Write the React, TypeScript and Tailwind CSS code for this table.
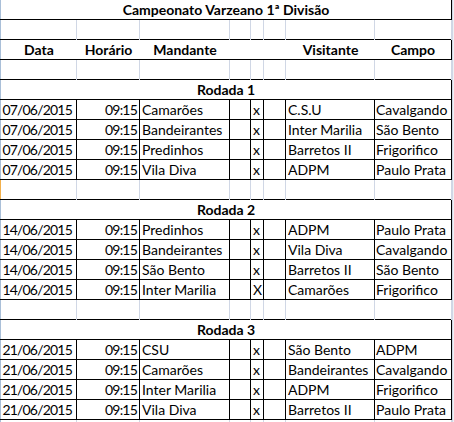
type Match = [string, string, string, string, string, string];

const rounds: Array<{ title: string; matches: Match[] }> = [
  {
    title: 'Rodada 1',
    matches: [
      ['07/06/2015', '09:15', 'Camarões', 'x', 'C.S.U', 'Cavalgando'],
      ['07/06/2015', '09:15', 'Bandeirantes', 'x', 'Inter Marilia', 'São Bento'],
      ['07/06/2015', '09:15', 'Predinhos', 'x', 'Barretos II', 'Frigorifico'],
      ['07/06/2015', '09:15', 'Vila Diva', 'x', 'ADPM', 'Paulo Prata'],
    ],
  },
  {
    title: 'Rodada 2',
    matches: [
      ['14/06/2015', '09:15', 'Predinhos', 'x', 'ADPM', 'Paulo Prata'],
      ['14/06/2015', '09:15', 'Bandeirantes', 'x', 'Vila Diva', 'Cavalgando'],
      ['14/06/2015', '09:15', 'São Bento', 'x', 'Barretos II', 'São Bento'],
      ['14/06/2015', '09:15', 'Inter Marilia', 'X', 'Camarões', 'Frigorifico'],
    ],
  },
  {
    title: 'Rodada 3',
    matches: [
      ['21/06/2015', '09:15', 'CSU', 'x', 'São Bento', 'ADPM'],
      ['21/06/2015', '09:15', 'Camarões', 'x', 'Bandeirantes', 'Cavalgando'],
      ['21/06/2015', '09:15', 'Inter Marilia', 'x', 'ADPM', 'Frigorifico'],
      ['21/06/2015', '09:15', 'Vila Diva', 'x', 'Barretos II', 'Paulo Prata'],
    ],
  },
];

const grid = 'grid grid-cols-[76px_63px_90px_21px_13px_22px_89px_77px]';
const cell = 'overflow-hidden whitespace-nowrap leading-[19px]';

function Edge({ marked }: { marked?: boolean }) {
  return <div className={marked ? 'w-px shrink-0 bg-[#f2b04c]' : 'w-px shrink-0 bg-[#a9bfd8]'} />;
}

function BlankRow({ marked, short }: { marked?: boolean; short?: boolean }) {
  return (
    <div className={short ? 'flex h-[2px] overflow-hidden' : 'flex h-5 border-b border-black'}>
      <Edge marked={marked} />
      <div className={grid}>
        {Array.from({ length: 8 }).map((_, i) => (
          <div key={i} className="h-5 border-r border-[#d0d7e5]" />
        ))}
      </div>
    </div>
  );
}

function SpanRow({ text }: { text: string }) {
  return (
    <div className="flex h-5 border-b border-black">
      <Edge />
      <div className={`${cell} w-[451px] border-r border-black text-center font-bold`}>{text}</div>
    </div>
  );
}

function HeaderRow() {
  return (
    <div className="flex h-5 border-b border-black">
      <Edge />
      <div className={`${grid} font-bold`}>
        <div className={`${cell} text-center`}>Data</div>
        <div className={`${cell} text-center`}>Horário</div>
        <div className={`${cell} text-center`}>Mandante</div>
        <div />
        <div />
        <div />
        <div className={`${cell} text-center`}>Visitante</div>
        <div className={`${cell} border-r border-black text-center`}>Campo</div>
      </div>
    </div>
  );
}

function MatchRow({ m }: { m: Match }) {
  const [date, time, home, vs, away, field] = m;
  return (
    <div className="flex h-5 border-b border-black">
      <Edge />
      <div className={grid}>
        <div className={`${cell} border-r border-black pr-[4px] text-right tracking-[-0.8px]`}>{date}</div>
        <div className={`${cell} border-r border-black pr-[2px] text-right tracking-[-0.8px]`}>{time}</div>
        <div className={`${cell} border-r border-black pl-[2px]`}>{home}</div>
        <div className={`${cell} border-r border-black`} />
        <div className={`${cell} border-r border-black pl-[2px]`}>{vs}</div>
        <div className={`${cell} border-r border-black`} />
        <div className={`${cell} border-r border-black pl-[2px]`}>{away}</div>
        <div className={`${cell} border-r border-black pl-[1px]`}>{field}</div>
      </div>
    </div>
  );
}

export default function App() {
  return (
    <div className="flex h-[422px] w-[454px] overflow-hidden bg-white font-['Lato','Open_Sans',sans-serif] text-[14px] text-black">
      <div className="w-[452px] shrink-0">
        <SpanRow text="Campeonato Varzeano 1ª Divisão" />
        <BlankRow />
        <HeaderRow />
        <BlankRow />
        {rounds.map((r, ri) => (
          <div key={r.title}>
            <SpanRow text={r.title} />
            {r.matches.map((m, i) => (
              <MatchRow key={i} m={m} />
            ))}
            {ri < rounds.length - 1 && <BlankRow marked={ri === 0} />}
          </div>
        ))}
        <BlankRow short />
      </div>
      <div className="w-px shrink-0 bg-[#d0d7e5]" />
      <div className="w-px shrink-0 bg-[#eef1f5]" />
    </div>
  );
}
